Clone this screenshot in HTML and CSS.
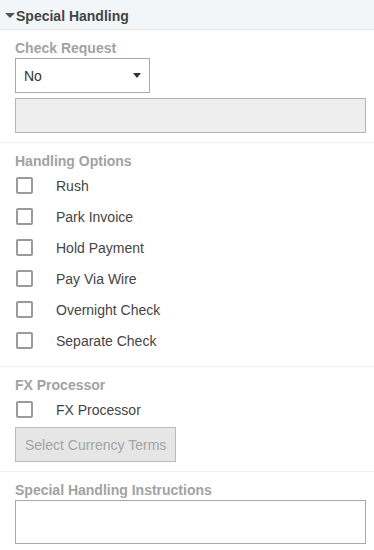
FILE: index.html
```
<!DOCTYPE html>
<html lang="en">
<head>
  <meta charset="UTF-8" />
  <title>Special Handling</title>
  <meta name="viewport" content="width=device-width, initial-scale=1.0" />
  <link rel="stylesheet" href="styles.css">
</head>
<body>

  <div class="panel">
    <div class="panel-header">
      <span class="caret-down"></span>
      <span class="panel-title">Special Handling</span>
    </div>

    <div class="section">
      <label class="field-label" for="checkRequest">Check Request</label>
      <div class="select-wrap">
        <select id="checkRequest">
          <option>No</option>
          <option>Yes</option>
        </select>
      </div>
      <div class="readonly-box"></div>
    </div>

    <div class="section options">
      <div class="field-label">Handling Options</div>
      <label class="check-row"><input type="checkbox" /><span>Rush</span></label>
      <label class="check-row"><input type="checkbox" /><span>Park Invoice</span></label>
      <label class="check-row"><input type="checkbox" /><span>Hold Payment</span></label>
      <label class="check-row"><input type="checkbox" /><span>Pay Via Wire</span></label>
      <label class="check-row"><input type="checkbox" /><span>Overnight Check</span></label>
      <label class="check-row"><input type="checkbox" /><span>Separate Check</span></label>
    </div>

    <div class="section">
      <div class="field-label">FX Processor</div>
      <label class="check-row"><input type="checkbox" /><span>FX Processor</span></label>
      <button class="btn-disabled" disabled>Select Currency Terms</button>
    </div>

    <div class="section">
      <label class="field-label" for="instructions">Special Handling Instructions</label>
      <textarea id="instructions"></textarea>
    </div>
  </div>

</body>
</html>
```

FILE: styles.css
```
body {
  font-family: 'Liberation Sans', Arial, sans-serif;
  font-size: 14px;
  line-height: 16px;
  color: #444;
  background: #fff;
  margin: 0;
}

.panel {
  width: 374px;
}

.panel-header {
  display: flex;
  align-items: center;
  height: 29px;
  padding-left: 5px;
  background: #f3f6f9;
  border-bottom: 1px solid #e3e6e9;
  box-sizing: content-box;
}

.caret-down {
  width: 0;
  height: 0;
  border-left: 5px solid transparent;
  border-right: 5px solid transparent;
  border-top: 5px solid #555;
  margin-top: 2px;
  margin-right: 1px;
}

.panel-title {
  font-weight: bold;
  color: #444;
  padding-top: 2px;
}

.section {
  padding: 10px 8px 9px 15px;
  border-top: 1px solid #eef1f4;
}

.panel-header + .section {
  border-top: none;
}

.options {
  padding-bottom: 10px;
}

.field-label {
  display: block;
  font-weight: bold;
  color: #a2a2a2;
  margin-bottom: 2px;
}

.select-wrap {
  position: relative;
  width: 135px;
}

.select-wrap::after {
  content: "";
  position: absolute;
  right: 9px;
  top: 15px;
  border-left: 4px solid transparent;
  border-right: 4px solid transparent;
  border-top: 5px solid #333;
  pointer-events: none;
}

select {
  -webkit-appearance: none;
  appearance: none;
  width: 135px;
  height: 35px;
  padding: 0 8px;
  border: 1px solid #a8a8a8;
  border-radius: 0;
  background: #fff;
  font-family: inherit;
  font-size: 14px;
  color: #333;
}

.readonly-box {
  margin-top: 5px;
  height: 33px;
  background: #eee;
  border: 1px solid #b4b4b4;
}

.check-row {
  display: flex;
  align-items: center;
  height: 31px;
  color: #444;
}

.field-label + .check-row {
  margin-top: -1px;
}

.check-row input {
  -webkit-appearance: none;
  appearance: none;
  width: 17px;
  height: 17px;
  margin: 0 23px 0 1px;
  border: 2px solid #9a9a9a;
  border-radius: 2px;
  background: #fff;
}

.btn-disabled {
  display: block;
  margin-top: 2px;
  height: 35px;
  padding: 0 9px;
  background: #e6e6e6;
  border: 1px solid #bcbcbc;
  border-radius: 0;
  font-family: inherit;
  font-size: 14px;
  color: #a4a4a4;
}

textarea {
  display: block;
  width: 351px;
  height: 44px;
  margin: 0;
  box-sizing: border-box;
  border: 1px solid #a8a8a8;
  resize: none;
  font-family: inherit;
  font-size: 14px;
}
```
